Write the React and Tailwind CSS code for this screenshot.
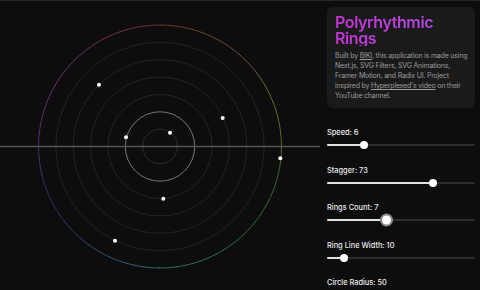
const CX = 160;
const CY = 145.5;
const STEP = 17.35;

const dots = [
  { x: 170, y: 131.7 },
  { x: 126, y: 136.3 },
  { x: 163.3, y: 197.7 },
  { x: 222.7, y: 117 },
  { x: 99, y: 83.7 },
  { x: 115, y: 239.7 },
  { x: 280.3, y: 157.3 },
];

const ringColors = ["#333333", "#767676", "#2c2c2c", "#2a2a2a", "#2a2a2a", "#282828"];

const controls = [
  { label: "Speed: 6", pos: 37 },
  { label: "Stagger: 73", pos: 105.7 },
  { label: "Rings Count: 7", pos: 59.7, active: true },
  { label: "Ring Line Width: 10", pos: 17.3 },
  { label: "Circle Radius: 50", pos: 20 },
];

const OuterRing = () => {
  const r = STEP * 7;
  const segs = [];
  const n = 90;
  for (let i = 0; i < n; i++) {
    // start at top, go clockwise
    const a0 = ((i / n) * 360 - 90) * (Math.PI / 180);
    const a1 = (((i + 1) / n) * 360 - 90 + 0.5) * (Math.PI / 180);
    const hue = (i / n) * 360;
    segs.push(
      <path
        key={i}
        d={`M ${CX + r * Math.cos(a0)} ${CY + r * Math.sin(a0)} A ${r} ${r} 0 0 1 ${CX + r * Math.cos(a1)} ${CY + r * Math.sin(a1)}`}
        stroke={`hsl(${hue}, 38%, 30%)`}
        strokeWidth="1"
        fill="none"
      />
    );
  }
  return <g>{segs}</g>;
};

const Rings = () => (
  <svg width="320" height="290" viewBox="0 0 320 290" className="block">
    {ringColors.map((c, i) => (
      <circle
        key={i}
        cx={CX}
        cy={CY}
        r={STEP * (i + 1)}
        stroke={c}
        strokeWidth={i === 1 ? 1 : 0.8}
        fill="none"
      />
    ))}
    <OuterRing />
    <line x1="0" y1={CY} x2="320" y2={CY} stroke="#555555" strokeWidth="1.4" />
    {dots.map((d, i) => (
      <circle key={i} cx={d.x} cy={d.y} r="2" fill="#ffffff" />
    ))}
  </svg>
);

const Slider = ({ pos, active }) => (
  <div className="relative h-[8px] flex items-center">
    <div className="relative w-full h-[2px] rounded-full bg-[#2c2c2c]">
      <div className="absolute left-0 top-0 h-full rounded-full bg-[#e0e0e0]" style={{ width: pos }} />
    </div>
    {active ? (
      <div
        className="absolute top-1/2 w-[9px] h-[9px] -translate-y-1/2 rounded-full bg-white ring-2 ring-[#8a8a8a]"
        style={{ left: pos - 4.5 }}
      />
    ) : (
      <div
        className="absolute top-1/2 w-[8px] h-[8px] -translate-y-1/2 rounded-full bg-white"
        style={{ left: pos - 4 }}
      />
    )}
  </div>
);

export default function App() {
  return (
    <div
      className="w-[480px] h-[290px] overflow-hidden flex bg-[#0d0d0d] border-t border-[#262626]"
      style={{ fontFamily: "Inter, 'Noto Sans', sans-serif" }}
    >
      {/* Canvas */}
      <div className="w-[320px] shrink-0">
        <Rings />
      </div>

      {/* Side panel */}
      <div className="flex-1 pl-[7px] pr-[6px] pt-[6px] flex flex-col">
        <div className="rounded-md bg-[#1a1a1a] px-2 pt-2 pb-[7px]">
          <h1 className="text-[16px] leading-[15.5px] font-semibold tracking-tight bg-gradient-to-r from-[#c532d4] to-[#a94fe8] bg-clip-text text-transparent">
            Polyrhythmic
            <br />
            Rings
          </h1>
          <p className="mt-[5px] text-[7px] leading-[10px] tracking-[-0.2px] text-[#9a9a9a] whitespace-nowrap">
            Built by <span className="underline">BIKI</span>, this application is made using
            <br />
            Next.js, SVG Filters, SVG Animations,
            <br />
            Framer Motion, and Radix UI. Project
            <br />
            inspired by <span className="underline">Hyperplexed's video</span> on their
            <br />
            YouTube channel.
          </p>
        </div>

        <div className="mt-[20px] flex flex-col gap-[16.5px]">
          {controls.map((c, i) => (
            <div key={i} className="flex flex-col">
              <p className="text-[7.4px] leading-[10px] font-medium text-[#ececec]">{c.label}</p>
              <div className="mt-[3px]">
                <Slider pos={c.pos} active={c.active} />
              </div>
            </div>
          ))}
        </div>
      </div>
    </div>
  );
}
